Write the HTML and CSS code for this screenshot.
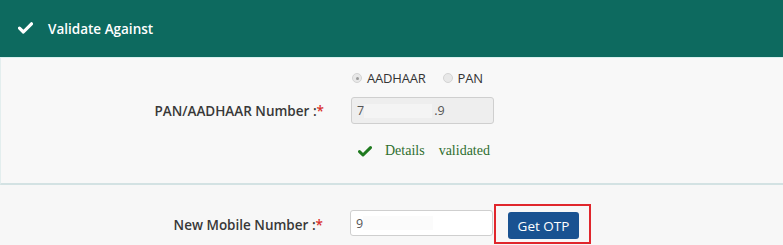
FILE: index.html
```html
<!DOCTYPE html>
<html>
<head>
<meta charset="utf-8">
<link rel="stylesheet" href="styles.css">
</head>
<body>
<div class="card">
  <div class="card-head">
    <svg class="head-check" width="15" height="12" viewBox="0 0 15 12"><path d="M1.5 6.2 L5.4 10 L13.5 1.8" fill="none" stroke="#fff" stroke-width="3.2" stroke-linecap="round" stroke-linejoin="round"/></svg>
    <span class="head-title">Validate Against</span>
  </div>
  <div class="card-body">
    <div class="row row-radio">
      <div class="label"></div>
      <div class="field radios">
        <label class="radio"><span class="dot checked"></span>AADHAAR</label>
        <label class="radio"><span class="dot"></span>PAN</label>
      </div>
    </div>
    <div class="row row-pan">
      <div class="label">PAN/AADHAAR Number :<span class="req">*</span></div>
      <div class="field">
        <div class="input disabled"><span>7</span><span class="blur"></span><span>.9</span></div>
      </div>
    </div>
    <div class="row row-valid">
      <div class="label"></div>
      <div class="field valid">
        <svg width="14" height="11" viewBox="0 0 14 11"><path d="M1.5 5.6 L5 9 L12.5 1.6" fill="none" stroke="#1f7a1f" stroke-width="3" stroke-linecap="round" stroke-linejoin="round"/></svg>
        <span class="valid-text">Details</span><span class="valid-text">validated</span>
      </div>
    </div>
  </div>
  <div class="section">
    <div class="row row-mobile">
      <div class="label">New Mobile Number :<span class="req">*</span></div>
      <div class="field mobile">
        <div class="input"><span>9</span><span class="blur2"></span></div>
        <div class="otp-box"><button class="btn">Get OTP</button></div>
      </div>
    </div>
  </div>
</div>
</body>
</html>
```

FILE: styles.css
```css
html, body {
  margin: 0;
  padding: 0;
  background: #f7f7f7;
  font-family: "Open Sans", "Liberation Sans", sans-serif;
  color: #333;
}
.card {
  width: 783px;
}
.card-head {
  background: #0d6a5f;
  border-bottom: 1px solid #d9f1ef;
  display: flex;
  align-items: center;
  padding-left: 18px;
  box-sizing: border-box;
  height: 58px;
}
.head-check {
  margin-right: 15px;
  margin-top: -1px;
}
.head-title {
  color: #fff;
  font-weight: 600;
  font-size: 13.5px;
}
.card-body {
  background: #f8f8f8;
  border-left: 1px solid #e3eeee;
  border-bottom: 2px solid #d3e2e3;
  height: 127px;
  box-sizing: border-box;
  padding-top: 10px;
}
.row {
  display: grid;
  grid-template-columns: 323px 1fr;
  column-gap: 28px;
  align-items: center;
}
.label {
  text-align: right;
  font-size: 13.5px;
  font-weight: 600;
  color: #383838;
}
.req {
  color: #d9302c;
}
.row-radio {
  height: 20px;
}
.radios {
  display: flex;
  gap: 17px;
  font-size: 13px;
  color: #333;
}
.radio {
  display: flex;
  align-items: center;
  letter-spacing: -0.2px;
}
.dot {
  width: 10px;
  height: 10px;
  border-radius: 50%;
  border: 1px solid #d4d4d4;
  background: #e8e8e8;
  margin-right: 5px;
  position: relative;
  box-sizing: border-box;
}
.dot.checked::after {
  content: "";
  position: absolute;
  left: 2.5px;
  top: 2.5px;
  width: 3px;
  height: 3px;
  border-radius: 50%;
  background: #9a9a9a;
}
.row-pan {
  margin-top: 9px;
}
.input {
  width: 143px;
  height: 27px;
  box-sizing: border-box;
  border: 1px solid #cfcfcf;
  border-radius: 3px;
  background: #fff;
  font-size: 12.5px;
  color: #555;
  display: flex;
  align-items: center;
  padding-left: 5px;
}
.input.disabled {
  background: #eeeeee;
  margin-left: -1px;
}
.blur {
  width: 68px;
  height: 14px;
  background: #f4f4f4;
  margin-right: 2px;
}
.blur2 {
  width: 70px;
  height: 14px;
  background: #fbfbfb;
}
.row-valid {
  margin-top: 19px;
}
.valid {
  display: flex;
  align-items: center;
  padding-left: 6px;
  font-family: "Liberation Serif", "Times New Roman", serif;
  font-size: 14px;
  color: #2f6e2f;
}
.valid svg {
  margin-right: 13px;
}
.valid-text {
  margin-right: 14px;
}
.section {
  padding-top: 19px;
}
.row-mobile .label {
  padding-top: 2px;
}
.mobile {
  display: flex;
  align-items: flex-start;
  margin-left: -1px;
}
.mobile .input {
  height: 26px;
  margin-top: 6px;
}
.otp-box {
  margin-left: 1px;
  width: 97px;
  height: 40px;
  box-sizing: border-box;
  border: 2px solid #e0262c;
  display: flex;
  align-items: center;
  justify-content: center;
  padding-left: 2px;
  padding-top: 3px;
}
.btn {
  width: 71px;
  height: 27px;
  border: none;
  border-radius: 3px;
  background: #195291;
  color: #fff;
  font-family: "Open Sans", "Liberation Sans", sans-serif;
  font-size: 13.5px;
  padding: 0;
}
```
